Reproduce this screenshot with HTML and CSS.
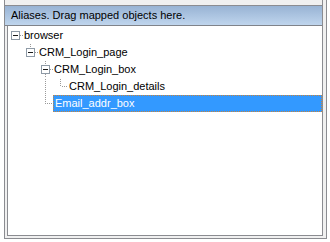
FILE: index.html
```html
<!DOCTYPE html>
<html lang="en">
<head>
  <meta charset="UTF-8" />
  <title>Aliases</title>
  <link rel="stylesheet" href="styles.css">
</head>
<body>

<div class="frame">
  <div class="panel">
    <div class="top-strip"></div>
    <div class="caption">Aliases. Drag mapped objects here.</div>
    <div class="tree-wrap">
      <div class="tree">
        <div class="row">
          <svg class="guide" width="15" height="17">
            <line class="dots" x1="12" y1="8.5" x2="15" y2="8.5"/>
            <rect class="box" x="3.5" y="4.5" width="8" height="8"/>
            <line class="minus" x1="5" y1="8.5" x2="10" y2="8.5"/>
          </svg>
          <span class="label">browser</span>
        </div>
        <div class="row">
          <svg class="guide" width="30" height="17">
            <line class="dots" x1="22.5" y1="0" x2="22.5" y2="4"/>
            <line class="dots" x1="27" y1="8.5" x2="30" y2="8.5"/>
            <rect class="box" x="18.5" y="4.5" width="8" height="8"/>
            <line class="minus" x1="20" y1="8.5" x2="25" y2="8.5"/>
          </svg>
          <span class="label">CRM_Login_page</span>
        </div>
        <div class="row">
          <svg class="guide" width="45" height="17">
            <line class="dots" x1="37.5" y1="0" x2="37.5" y2="4"/>
            <line class="dots" x1="37.5" y1="13" x2="37.5" y2="17"/>
            <line class="dots" x1="42" y1="8.5" x2="45" y2="8.5"/>
            <rect class="box" x="33.5" y="4.5" width="8" height="8"/>
            <line class="minus" x1="35" y1="8.5" x2="40" y2="8.5"/>
          </svg>
          <span class="label">CRM_Login_box</span>
        </div>
        <div class="row">
          <svg class="guide" width="60" height="17">
            <line class="dots" x1="37.5" y1="1" x2="37.5" y2="17"/>
            <line class="dots" x1="52.5" y1="1" x2="52.5" y2="9"/>
            <line class="dots" x1="54" y1="8.5" x2="60" y2="8.5"/>
          </svg>
          <span class="label">CRM_Login_details</span>
        </div>
        <div class="row">
          <svg class="guide" width="45" height="17">
            <line class="dots" x1="37.5" y1="0" x2="37.5" y2="9"/>
            <line class="dots" x1="39" y1="8.5" x2="45" y2="8.5"/>
          </svg>
          <span class="label selected">Email_addr_box</span>
        </div>
      </div>
    </div>
  </div>
</div>

</body>
</html>
```

FILE: styles.css
```css
body {
  margin: 0;
  background: #ffffff;
  font-family: "Liberation Sans", Arial, sans-serif;
  font-size: 11px;
  color: #000;
}
.frame {
  margin-left: 4px;
  width: 321px;
  height: 238px;
  background: #f0f0f0;
  border-left: 1px solid #8b8c91;
  border-right: 1px solid #8b8c91;
  border-bottom: 1px solid #8b8c91;
}
.panel {
  width: 317px;
  height: 236px;
  border-right: 1px solid #8b8c91;
  display: flex;
  flex-direction: column;
}
.top-strip {
  height: 5px;
  border-bottom: 1px solid #8b8c91;
}
.caption {
  height: 19px;
  line-height: 19px;
  padding-left: 6px;
  background: linear-gradient(#98b3d4, #bfd5ed);
  border-bottom: 1px solid #80838a;
  white-space: nowrap;
}
.tree-wrap {
  flex: 1;
  padding-left: 2px;
  display: flex;
}
.tree {
  flex: 1;
  background: #fff;
  border-left: 1px solid #8b8c91;
  border-bottom: 1px solid #8b8c91;
  padding-top: 1px;
}
.row {
  height: 17px;
  display: flex;
  align-items: center;
}
.guide {
  display: block;
  flex: none;
}
.dots {
  stroke: #9a9a9a;
  stroke-width: 1;
  stroke-dasharray: 1 1;
}
.box {
  fill: #fff;
  stroke: #8e9aa6;
  stroke-width: 1;
}
.minus {
  stroke: #1a1a1a;
  stroke-width: 1;
}
.label {
  height: 17px;
  line-height: 17px;
  padding-left: 1px;
  white-space: nowrap;
  box-sizing: border-box;
}
.label.selected {
  flex: 1;
  padding-left: 1px;
  background: #3399ff;
  color: #fff;
  border: 1px dotted #c8843c;
  line-height: 15px;
}
```
